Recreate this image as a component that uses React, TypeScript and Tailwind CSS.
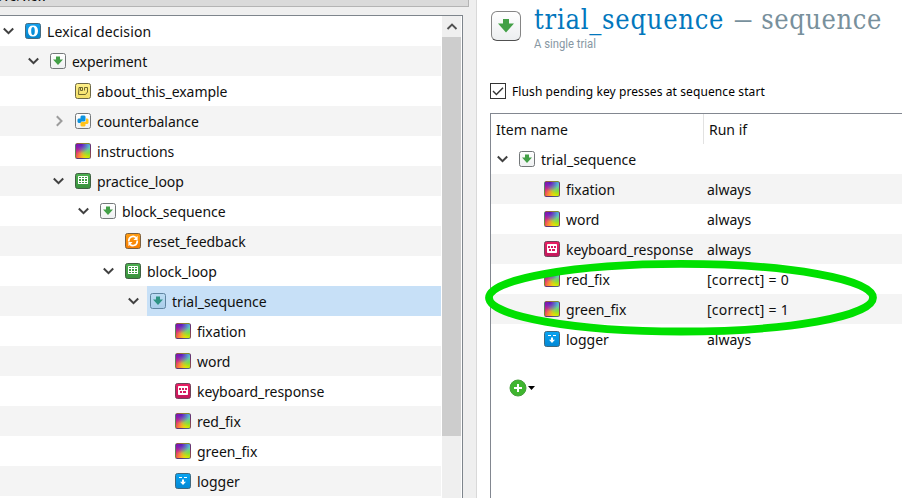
import React from 'react';

type Kind = 'root' | 'seq' | 'note' | 'python' | 'sketch' | 'loop' | 'reset' | 'keyboard' | 'logger';

function ItemIcon({ kind, selected = false }: { kind: Kind; selected?: boolean }) {
  if (kind === 'sketch') {
    return (
      <span className="block h-4 w-4 shrink-0 rounded-[2.5px] border border-[#4b4b4b]/60 bg-[radial-gradient(circle_at_35%_0%,#5a10c0_0%,#5a10c000_55%),radial-gradient(circle_at_85%_10%,#50c0e8_0%,#50c0e800_60%),radial-gradient(circle_at_95%_55%,#88e800_0%,#88e80000_60%),radial-gradient(circle_at_75%_100%,#fff000_0%,#fff00000_65%),radial-gradient(circle_at_25%_100%,#ff5048_0%,#ff504800_65%),linear-gradient(90deg,#b8109a,#d88090_50%,#90e070)]" />
    );
  }
  const fills: Record<string, [string, string, string]> = {
    root: ['#12a0ee', '#0284cc', '#456b80'],
    seq: selected ? ['#bcdcf4', '#a9cde9', '#5f84a0'] : ['#ffffff', '#eef0f1', '#737779'],
    note: ['#fff08a', '#f3df68', '#6b6747'],
    python: ['#ffffff', '#eef0f1', '#737779'],
    loop: ['#4caf50', '#38913c', '#405f42'],
    reset: ['#ff9d12', '#f57c00', '#7b6040'],
    keyboard: ['#e91e63', '#c2185b', '#70445a'],
    logger: ['#08a4f2', '#0488d4', '#40687e'],
  };
  const [top, bottom, edge] = fills[kind];
  const id = `fill-${kind}-${selected ? 'on' : 'off'}`;
  return (
    <svg className="h-4 w-4 shrink-0" viewBox="0 0 16 16" fill="none">
      <defs>
        <linearGradient id={id} x1="0" y1="0" x2="0" y2="1">
          <stop stopColor={top} />
          <stop offset="1" stopColor={bottom} />
        </linearGradient>
      </defs>
      <rect x=".5" y=".5" width="15" height="15" rx="2" fill={`url(#${id})`} stroke={edge} />
      {kind === 'root' && (
        <path
          fillRule="evenodd"
          d="M8 2.5c3.3 0 5 2 5 5.500s-1.700 5.500-5 5.500-5-2-5-5.500 1.700-5.500 5-5.500zm0 1.500c-1.300 0-1.800 1.500-1.800 4s.5 4 1.800 4 1.800-1.500 1.800-4S9.300 4 8 4z"
          fill="#fff"
        />
      )}
      {kind === 'seq' && <path d="M6 3.500h4v3h3L8 12 3 6.500h3z" fill={selected ? '#2f9484' : '#43a047'} />}
      {kind === 'note' && (
        <path d="M4 4.500h3.500v3H5.500V5M4 4.500 3.500 11.500h7L12.500 9V4.500H9.500v3" stroke="#6f682f" strokeWidth="1" />
      )}
      {kind === 'python' && (
        <>
          <path d="M6.500 2.500h3l1 1v4l-1 1H6.500L5.500 10H3.500l-1-1V6.500l1-1h2v-2z" fill="#0c93df" />
          <path d="M11 5.500h1.500l1 1V10l-1 1H10.500v1.500l-1 1h-3l-1-1V10l1-1h3.500l1-1z" fill="#ffc21a" />
        </>
      )}
      {kind === 'loop' && (
        <>
          <rect x="3" y="3" width="10" height="8" rx=".6" fill="#fff" />
          <path d="M4 4h2v1H4zM7 4h2v1H7zM10 4h2v1h-2zM4 6h2v2H4zM7 6h2v2H7zM10 6h2v2h-2zM4 9h2v1H4zM7 9h2v1H7zM10 9h2v1h-2z" fill="#3d9a42" />
        </>
      )}
      {kind === 'reset' && (
        <>
          <path d="M3.800 8.500v-.9a4.200 4.200 0 0 1 7.200-2.900M12.200 7.500v.9a4.200 4.200 0 0 1-7.200 2.900" stroke="#fff" strokeWidth="1.700" />
          <path d="M12.600 2.800v4.200H8.400zM3.400 13.200V9h4.200z" fill="#fff" />
        </>
      )}
      {kind === 'keyboard' && (
        <>
          <rect x="3" y="3" width="10" height="9" rx=".8" fill="#fff" />
          <path d="M4 5h2v2H4zM7 5h2v2H7zM10 5h2v2h-2zM5 8h2v2H5zM8 8h3v2H8z" fill="#d81b60" />
        </>
      )}
      {kind === 'logger' && <path d="M4 4h3v1H4zM9 4h3v1H9zM7 6.500h2v2.300h2L8 12 5 8.800h2z" fill="#fff" />}
    </svg>
  );
}

function Chevron({ open = true }: { open?: boolean }) {
  return (
    <svg className="h-4 w-4 shrink-0" viewBox="0 0 16 16" fill="none">
      {open ? (
        <path d="M2.800 5.500 7.500 10.200 12.200 5.500" stroke="#404040" strokeWidth="2" />
      ) : (
        <path d="M5.800 3.300 10.500 8 5.800 12.700" stroke="#9c9c9c" strokeWidth="2" />
      )}
    </svg>
  );
}

type Node = { name: string; kind: Kind; indent: string; open?: boolean; leaf?: boolean; selected?: boolean };

const overview: Node[] = [
  { name: 'Lexical decision', kind: 'root', indent: 'pl-0' },
  { name: 'experiment', kind: 'seq', indent: 'pl-[25px]' },
  { name: 'about_this_example', kind: 'note', indent: 'pl-[50px]', leaf: true },
  { name: 'counterbalance', kind: 'python', indent: 'pl-[50px]', open: false },
  { name: 'instructions', kind: 'sketch', indent: 'pl-[50px]', leaf: true },
  { name: 'practice_loop', kind: 'loop', indent: 'pl-[50px]' },
  { name: 'block_sequence', kind: 'seq', indent: 'pl-[75px]' },
  { name: 'reset_feedback', kind: 'reset', indent: 'pl-[100px]', leaf: true },
  { name: 'block_loop', kind: 'loop', indent: 'pl-[100px]' },
  { name: 'trial_sequence', kind: 'seq', indent: 'pl-[125px]', selected: true },
  { name: 'fixation', kind: 'sketch', indent: 'pl-[150px]', leaf: true },
  { name: 'word', kind: 'sketch', indent: 'pl-[150px]', leaf: true },
  { name: 'keyboard_response', kind: 'keyboard', indent: 'pl-[150px]', leaf: true },
  { name: 'red_fix', kind: 'sketch', indent: 'pl-[150px]', leaf: true },
  { name: 'green_fix', kind: 'sketch', indent: 'pl-[150px]', leaf: true },
  { name: 'logger', kind: 'logger', indent: 'pl-[150px]', leaf: true },
];

const items: { name: string; kind: Kind; run: string }[] = [
  { name: 'fixation', kind: 'sketch', run: 'always' },
  { name: 'word', kind: 'sketch', run: 'always' },
  { name: 'keyboard_response', kind: 'keyboard', run: 'always' },
  { name: 'red_fix', kind: 'sketch', run: '[correct] = 0' },
  { name: 'green_fix', kind: 'sketch', run: '[correct] = 1' },
  { name: 'logger', kind: 'logger', run: 'always' },
];

function OverviewPanel() {
  return (
    <aside className="flex w-[477px] shrink-0 flex-col border-r border-[#d9d9d9] bg-[#efefef]">
      <div className="h-[7px] w-[469px] shrink-0 overflow-hidden border-r border-b border-[#b4b4b4] bg-[#dadada]">
        <div className="-mt-[11px] -ml-[6px] text-[12px] leading-4">Overview</div>
      </div>
      <div className="mt-2 flex w-[463px] flex-1 border-t border-r border-[#7e858c] bg-white">
        <div className="w-[441px] shrink-0">
          {overview.map((n, i) => (
            <div key={n.name} className={`flex h-[30px] items-center ${n.indent} ${i % 2 ? 'bg-[#f4f4f4]' : 'bg-white'}`}>
              <div className="flex w-[22px] shrink-0 pl-px">{!n.leaf && <Chevron open={n.open !== false} />}</div>
              <div className={`flex h-full flex-1 items-center gap-[6px] pl-[3px] ${n.selected ? 'bg-[#c7e0f7]' : ''}`}>
                <ItemIcon kind={n.kind} selected={n.selected} />
                <span className={`whitespace-nowrap ${i === 0 ? 'tracking-[0.14px]' : 'tracking-[-0.04px]'}`}>{n.name}</span>
              </div>
            </div>
          ))}
        </div>
        <div className="ml-px flex w-[19px] flex-col bg-[#efefef]">
          <div className="flex h-[21px] justify-center pt-[2px]">
            <svg className="h-4 w-4" viewBox="0 0 16 16" fill="none">
              <path d="M3.500 11 8 6.500l4.500 4.500" stroke="#505050" strokeWidth="1.900" />
            </svg>
          </div>
          <div className="h-[399px] bg-[#cdcdcd]" />
        </div>
        <div className="w-px bg-white" />
      </div>
    </aside>
  );
}

export default function App() {
  return (
    <div className="relative flex h-[498px] w-[902px] overflow-hidden bg-white font-['Noto_Sans','Open_Sans',sans-serif] text-[14px] text-[#101010]">
      <OverviewPanel />
      <main className="flex min-w-0 flex-1 flex-col pl-[13px]">
        <header className="flex h-[82px] shrink-0">
          <div className="mt-[11px] ml-px flex h-[30px] w-[30px] shrink-0 items-center justify-center rounded-[6px] border border-[#858585] border-b-[#505050] bg-gradient-to-b from-white to-[#eceef0]">
            <svg className="h-[16px] w-[16px]" viewBox="0 0 16 16">
              <path d="M5 1h6v4.500h5L8 14.500 0 5.500h5z" fill="#43a047" />
            </svg>
          </div>
          <div className="ml-[13px] flex flex-col">
            <h1 className="flex h-9 items-center gap-[10px] pt-[3px] whitespace-nowrap font-['DejaVu_Serif_Condensed','DejaVu_Serif',serif] text-[27px] leading-9 text-[#0277bd]">
              <span className="tracking-[0.76px]">trial_sequence</span>
              <span className="flex items-center gap-[9px] text-[#78909c]">
                <span className="inline-block w-[18px] origin-left scale-x-[0.75]">—</span>
                <span className="tracking-[0.6px]">sequence</span>
              </span>
            </h1>
            <p className="origin-left scale-x-[0.94] font-[Roboto] text-[12px] leading-4 text-[#8797a3]">A single trial</p>
          </div>
        </header>
        <label className="flex h-[18px] shrink-0 items-center gap-[6px] text-[12px] tracking-[0.1px] text-black">
          <svg className="h-4 w-4" viewBox="0 0 16 16" fill="none">
            <rect x=".5" y=".5" width="15" height="15" fill="#fff" stroke="#333" />
            <path d="m3 8 3.400 3.400L13 4.800" stroke="#333" strokeWidth="1.400" />
          </svg>
          <span className="whitespace-nowrap pt-px">Flush pending key presses at sequence start</span>
        </label>
        <section className="mt-[13px] flex flex-1 flex-col border-t border-l border-[#828790]">
          <div className="flex h-[30px] items-center">
            <div className="flex h-full w-[213px] items-center border-r border-[#e2e2e2] pl-[5px]">Item name</div>
            <div className="pl-[5px]">Run if</div>
          </div>
          <div className="flex h-[30px] items-center pl-[4px]">
            <Chevron />
            <div className="ml-[8px] flex items-center gap-[6px]">
              <ItemIcon kind="seq" />
              <span>trial_sequence</span>
            </div>
          </div>
          {items.map((it, i) => (
            <div key={it.name} className={`flex h-[30px] items-center ${i % 2 ? 'bg-white' : 'bg-[#f4f4f4]'}`}>
              <div className="flex w-[216px] items-center gap-[6px] pl-[53px]">
                <ItemIcon kind={it.kind} />
                <span className="whitespace-nowrap tracking-[-0.04px]">{it.name}</span>
              </div>
              <span className={`whitespace-nowrap ${it.run === 'always' ? '' : 'tracking-[0.25px]'}`}>{it.run}</span>
            </div>
          ))}
          <div className="mt-[25px] flex items-center gap-px pl-[18px]">
            <svg className="h-[18px] w-[18px]" viewBox="0 0 18 18">
              <circle cx="9" cy="9" r="8" fill="#3fb62f" stroke="#45a03b" />
              <path d="M9 5v8M5 9h8" stroke="#fff" strokeWidth="2" />
            </svg>
            <svg className="h-[4px] w-[7px]" viewBox="0 0 7 4">
              <path d="M0 0h7L3.500 4z" fill="#000" />
            </svg>
          </div>
        </section>
      </main>
      <svg className="pointer-events-none absolute inset-0 h-[498px] w-[902px]" viewBox="0 0 902 498" fill="none">
        <ellipse cx="681" cy="297.7" rx="192" ry="33.8" stroke="#00e000" strokeWidth="7.8" />
      </svg>
    </div>
  );
}
